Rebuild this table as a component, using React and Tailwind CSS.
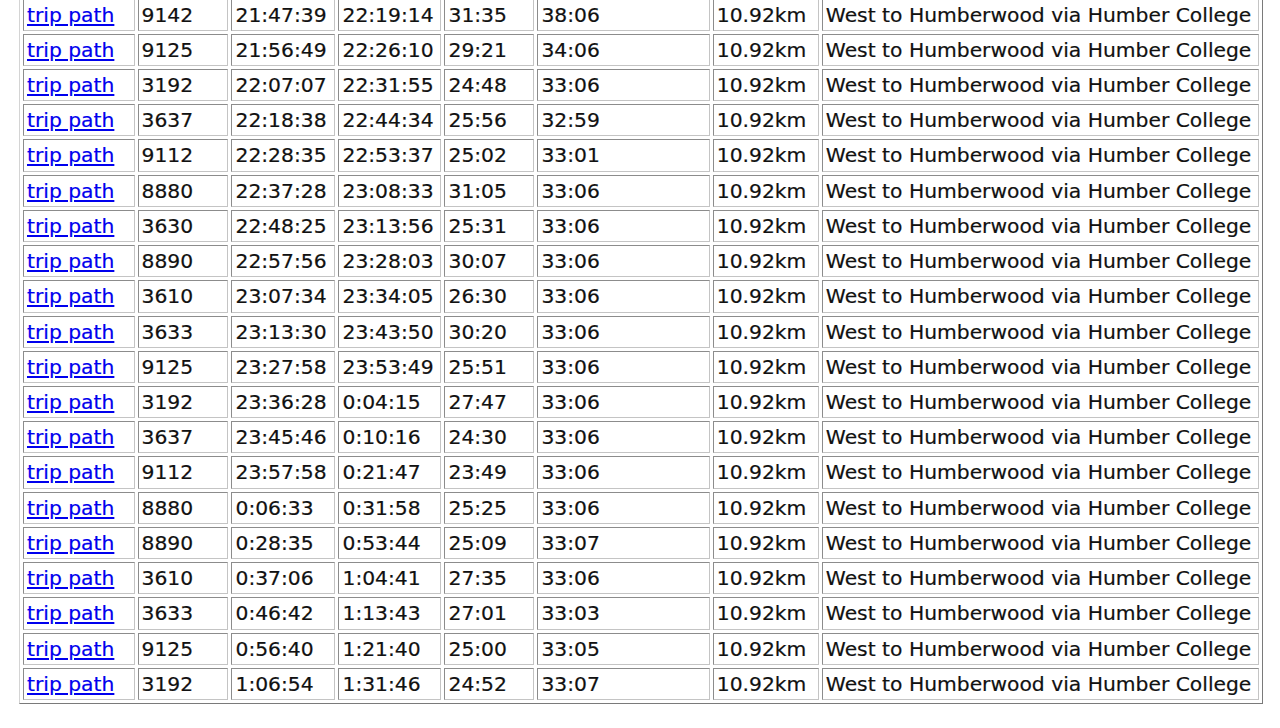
const rows = [
  ["9142", "21:47:39", "22:19:14", "31:35", "38:06"],
  ["9125", "21:56:49", "22:26:10", "29:21", "34:06"],
  ["3192", "22:07:07", "22:31:55", "24:48", "33:06"],
  ["3637", "22:18:38", "22:44:34", "25:56", "32:59"],
  ["9112", "22:28:35", "22:53:37", "25:02", "33:01"],
  ["8880", "22:37:28", "23:08:33", "31:05", "33:06"],
  ["3630", "22:48:25", "23:13:56", "25:31", "33:06"],
  ["8890", "22:57:56", "23:28:03", "30:07", "33:06"],
  ["3610", "23:07:34", "23:34:05", "26:30", "33:06"],
  ["3633", "23:13:30", "23:43:50", "30:20", "33:06"],
  ["9125", "23:27:58", "23:53:49", "25:51", "33:06"],
  ["3192", "23:36:28", "0:04:15", "27:47", "33:06"],
  ["3637", "23:45:46", "0:10:16", "24:30", "33:06"],
  ["9112", "23:57:58", "0:21:47", "23:49", "33:06"],
  ["8880", "0:06:33", "0:31:58", "25:25", "33:06"],
  ["8890", "0:28:35", "0:53:44", "25:09", "33:07"],
  ["3610", "0:37:06", "1:04:41", "27:35", "33:06"],
  ["3633", "0:46:42", "1:13:43", "27:01", "33:03"],
  ["9125", "0:56:40", "1:21:40", "25:00", "33:05"],
  ["3192", "1:06:54", "1:31:46", "24:52", "33:07"],
];

const cell =
  "h-[32.22px] p-0 pl-[3px] align-middle whitespace-nowrap border-[1.5px] border-t-[#8c8c8c] border-l-[#8c8c8c] border-b-[#c4c4c4] border-r-[#c4c4c4]";

export default function App() {
  return (
    <div className="min-h-[728px] bg-white overflow-hidden pl-[19px]">
      <table
        className="-mt-[5.4px] table-fixed border-separate border-spacing-x-[3.5px] border-spacing-y-[3.45px] border-[1.5px] border-t-[#d4d4d4] border-l-[#d4d4d4] border-b-[#7a7a7a] border-r-[#7a7a7a] text-[20.3px] leading-none text-[#111] [-webkit-text-stroke:0.2px]"
        style={{ fontFamily: '"DejaVu Sans", Verdana, sans-serif', width: "1243.5px" }}
      >
        <colgroup>
          <col className="w-[111px]" />
          <col className="w-[90.5px]" />
          <col className="w-[103.5px]" />
          <col className="w-[102.5px]" />
          <col className="w-[89.5px]" />
          <col className="w-[171.5px]" />
          <col className="w-[105.5px]" />
          <col className="w-[434.5px]" />
        </colgroup>
        <tbody>
          {rows.map((r, i) => (
            <tr key={i}>
              <td className={cell}>
                <a href="#" className="text-[#0000ee] underline">
                  trip path
                </a>
              </td>
              {r.map((v, j) => (
                <td key={j} className={cell}>
                  {v}
                </td>
              ))}
              <td className={cell}>10.92km</td>
              <td className={cell}>West to Humberwood via Humber College</td>
            </tr>
          ))}
        </tbody>
      </table>
    </div>
  );
}
